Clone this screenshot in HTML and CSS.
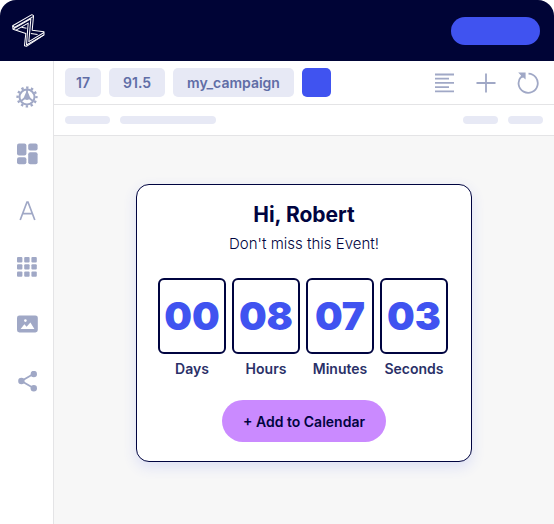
FILE: index.html
```html
<!DOCTYPE html>
<html lang="en">
<head>
  <meta charset="UTF-8">
  <meta name="viewport" content="width=device-width, initial-scale=1.0">
  <title>Campaign Editor</title>
  <link rel="stylesheet" href="styles.css">
</head>
<body>

<header class="topbar">
  <a href="#" class="logo" aria-label="Home">
    <svg viewBox="36 44 98 98" width="33" height="33">
      <path d="M38 79 L95 46 L100 49 L96 92 L131 97 L131 106 L79 140 L73 138 L77 102 L39 89 Z"/>
      <path d="M39 89 L92 58 L86 126 L131 99"/>
      <path d="M38 79 L43 84 L100 51 M48 92 L84 71 L79 136 L131 106"/>
      <path d="M64 83 L79 86 M92 102 L112 105"/>
    </svg>
  </a>
  <button class="publish" aria-label="Publish"></button>
</header>

<div class="workspace">
  <nav class="sidebar">
    <button class="icon-btn" aria-label="Settings">
      <svg viewBox="0 0 22 22" width="22" height="22">
        <circle cx="11" cy="11" r="9.4" fill="none" stroke="currentColor" stroke-width="2.4" stroke-dasharray="2.4 2.522" stroke-dashoffset="1.2"/>
        <circle cx="11" cy="11" r="7.5" fill="none" stroke="currentColor" stroke-width="2"/>
        <path d="M11 4 V11 M9 12 L5 15 M13 12 L17 15" fill="none" stroke="currentColor" stroke-width="1.8"/>
        <path d="M10.2 6 H11.8 L14.6 12.6 Q11 15.4 7.4 12.6 Z" fill="currentColor"/>
      </svg>
    </button>
    <button class="icon-btn" aria-label="Blocks">
      <svg viewBox="0 0 22 22" width="22" height="22" fill="currentColor">
        <rect x="1" y="0.6" width="9.4" height="12" rx="2"/>
        <rect x="12.2" y="0.6" width="9.4" height="7" rx="2"/>
        <rect x="1" y="14.2" width="9.4" height="7" rx="2"/>
        <rect x="12.2" y="9.2" width="9.4" height="12" rx="2"/>
      </svg>
    </button>
    <button class="icon-btn" aria-label="Text">
      <svg viewBox="0 0 22 22" width="22" height="22" fill="none" stroke="currentColor" stroke-width="1.7">
        <path d="M4.2 20 L11 2 H12 L18.8 20 M6.6 13.6 H16.4"/>
      </svg>
    </button>
    <button class="icon-btn" aria-label="Grid">
      <svg viewBox="0 0 22 22" width="22" height="22" fill="currentColor">
        <rect x="1" y="0" width="5.4" height="5.4" rx="1"/>
        <rect x="8.2" y="0" width="5.4" height="5.4" rx="1"/>
        <rect x="15.4" y="0" width="5.4" height="5.4" rx="1"/>
        <rect x="1" y="7.2" width="5.4" height="5.4" rx="1"/>
        <rect x="8.2" y="7.2" width="5.4" height="5.4" rx="1"/>
        <rect x="15.4" y="7.2" width="5.4" height="5.4" rx="1"/>
        <rect x="1" y="14.4" width="5.4" height="5.4" rx="1"/>
        <rect x="8.2" y="14.4" width="5.4" height="5.4" rx="1"/>
        <rect x="15.4" y="14.4" width="5.4" height="5.4" rx="1"/>
      </svg>
    </button>
    <button class="icon-btn" aria-label="Images">
      <svg viewBox="0 0 22 22" width="22" height="22">
        <rect x="1" y="1.4" width="20.8" height="17" rx="2.4" fill="currentColor"/>
        <path d="M4.6 15 L8.4 10.2 L10.6 12.8 L14.4 8.6 L18.4 15 Z" fill="#fff"/>
        <circle cx="9.4" cy="6.6" r="1.3" fill="#fff"/>
      </svg>
    </button>
    <button class="icon-btn" aria-label="Share">
      <svg viewBox="0 0 22 22" width="22" height="22" fill="currentColor">
        <path d="M17.8 2.8 L5.4 10 L17.8 17.2" fill="none" stroke="currentColor" stroke-width="1.8"/>
        <circle cx="17.8" cy="3" r="3.2"/>
        <circle cx="5.4" cy="10" r="3.2"/>
        <circle cx="17.8" cy="17.2" r="3.2"/>
      </svg>
    </button>
  </nav>

  <main class="editor">
    <div class="toolbar">
      <button class="chip">17</button>
      <button class="chip chip-wide">91.5</button>
      <button class="chip chip-wide">my_campaign</button>
      <button class="swatch" aria-label="Colour"></button>
      <div class="tools">
        <button class="icon-btn" aria-label="Align left">
          <svg viewBox="0 0 22 22" width="22" height="22" fill="none" stroke="currentColor" stroke-width="1.8">
            <path d="M2 2.5 H21 M2 6.7 H16 M2 10.9 H21 M2 15.1 H16 M2 19.3 H21"/>
          </svg>
        </button>
        <button class="icon-btn" aria-label="Add">
          <svg viewBox="0 0 22 22" width="22" height="22" fill="none" stroke="currentColor" stroke-width="1.8">
            <path d="M11 1.5 V20.5 M1.5 11 H20.5"/>
          </svg>
        </button>
        <button class="icon-btn" aria-label="Reset">
          <svg viewBox="0 0 22 22" width="22" height="22" fill="none" stroke="currentColor" stroke-width="1.8">
            <path d="M11.5 1.6 A9.6 9.6 0 1 1 4 4.8"/>
            <path d="M1.2 0.6 H8.6 V7.6 L6.2 5.4 L3.4 6.4 L4 3.4 Z" fill="currentColor" stroke="none"/>
          </svg>
        </button>
      </div>
    </div>

    <div class="subbar">
      <span class="bar bar-small"></span>
      <span class="bar bar-long"></span>
      <span class="bar bar-tiny bar-right"></span>
      <span class="bar bar-tiny"></span>
    </div>

    <div class="canvas">
      <section class="card">
        <h1>Hi, Robert</h1>
        <p class="message">Don't miss this Event!</p>
        <div class="countdown">
          <div class="unit">
            <div class="number">00</div>
            <div class="label">Days</div>
          </div>
          <div class="unit">
            <div class="number">08</div>
            <div class="label">Hours</div>
          </div>
          <div class="unit">
            <div class="number">07</div>
            <div class="label">Minutes</div>
          </div>
          <div class="unit">
            <div class="number">03</div>
            <div class="label">Seconds</div>
          </div>
        </div>
        <button class="calendar-btn">+ Add to Calendar</button>
      </section>
    </div>
  </main>
</div>

</body>
</html>
```
FILE: styles.css
```css
* {
  box-sizing: border-box;
}

body {
  font-family: Inter, "Liberation Sans", sans-serif;
  margin: 0;
  min-height: 100vh;
  display: flex;
  flex-direction: column;
  background-color: #fff;
  color: #000440;
}

button {
  font-family: inherit;
  border: none;
  padding: 0;
  cursor: pointer;
}

svg {
  display: block;
}

/* Top bar */
.topbar {
  display: flex;
  justify-content: space-between;
  align-items: center;
  padding: 14px 14px;
  padding-left: 12px;
  background-color: #000436;
  border-radius: 16px 16px 0 0;
}

.logo svg {
  fill: none;
  stroke: #fff;
  stroke-width: 3;
  stroke-linejoin: round;
}

.publish {
  width: 89px;
  height: 28px;
  border-radius: 14px;
  background-color: #4053f0;
}

.workspace {
  flex: 1;
  display: flex;
}

/* Sidebar */
.sidebar {
  width: 54px;
  flex-shrink: 0;
  display: flex;
  flex-direction: column;
  align-items: center;
  gap: 35px;
  padding-top: 25px;
  border-right: 1px solid #e4e4e6;
}

.icon-btn {
  background: none;
  color: #a0a8c6;
}

.editor {
  flex: 1;
  display: flex;
  flex-direction: column;
}

/* Toolbar */
.toolbar {
  display: flex;
  align-items: center;
  gap: 8px;
  padding: 7px 15px 7px 11px;
  border-bottom: 1px solid #e4e4e6;
}

.chip {
  height: 29px;
  padding: 0 11px;
  border-radius: 5px;
  background-color: #e7e9f5;
  color: #606da6;
  font-size: 14px;
  font-weight: 600;
}

.chip-wide {
  padding: 0 14px;
}

.swatch {
  width: 29px;
  height: 29px;
  border-radius: 5px;
  background-color: #4053f0;
}

.tools {
  display: flex;
  gap: 20px;
  margin-left: auto;
}

.subbar {
  display: flex;
  align-items: center;
  gap: 10px;
  height: 31px;
  padding: 0 11px;
  border-bottom: 1px solid #e4e4e6;
}

.bar {
  height: 8px;
  border-radius: 4px;
  background-color: #e7e9f5;
}

.bar-small {
  width: 45px;
}

.bar-long {
  width: 96px;
}

.bar-tiny {
  width: 35px;
}

.bar-right {
  margin-left: auto;
}

/* Canvas */
.canvas {
  flex: 1;
  padding: 48px 20px;
  background-color: #f7f7f7;
}

.card {
  max-width: 336px;
  margin: 0 auto;
  padding: 16px 21px 19px;
  border: 1px solid #000440;
  border-radius: 13px;
  background-color: #fff;
  box-shadow: 0 5px 14px rgba(64, 83, 240, 0.14);
  text-align: center;
}

h1 {
  margin: 0;
  font-size: 21px;
  line-height: 28px;
  font-weight: 700;
}

.message {
  margin: 5px 0 24px;
  font-size: 15px;
  line-height: 20px;
  font-weight: 300;
}

.countdown {
  display: grid;
  grid-template-columns: repeat(4, 1fr);
  gap: 6px;
  margin-right: 2px;
}

.number {
  border: 2px solid #000440;
  border-radius: 6px;
  color: #4053f0;
  font-size: 39px;
  line-height: 72px;
  font-weight: 900;
}

.label {
  margin-top: 5px;
  color: #2a3068;
  font-size: 14px;
  line-height: 20px;
  font-weight: 600;
}

.calendar-btn {
  height: 42px;
  margin-top: 21px;
  padding: 0 21px;
  border-radius: 21px;
  background-color: #ca8aff;
  color: #000440;
  font-size: 14px;
  font-weight: 600;
}
```
